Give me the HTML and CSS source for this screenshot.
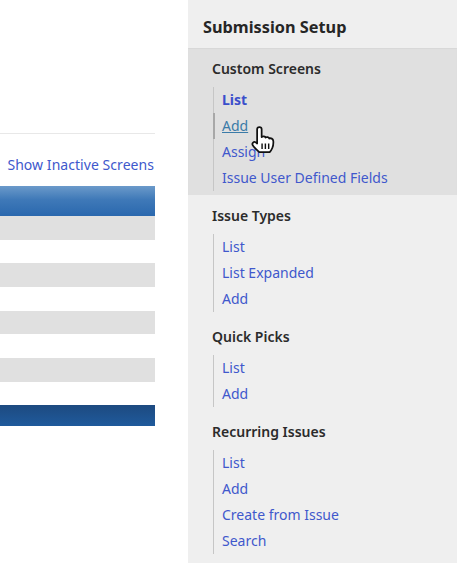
FILE: index.html
```html
<!DOCTYPE html>
<html>
<head>
  <meta charset="utf-8">
  <meta name="viewport" content="width=device-width, initial-scale=1.0">
  <title>Submission Setup</title>
  <link rel="stylesheet" href="styles.css">
</head>
<body>
  <main class="content">
    <div class="rule"></div>
    <div class="actions"><a href="#">Show Inactive Screens</a></div>
    <div class="table">
      <div class="table-head"></div>
      <div class="row"></div>
      <div class="row alt"></div>
      <div class="row"></div>
      <div class="row alt"></div>
      <div class="row"></div>
      <div class="row alt"></div>
      <div class="row"></div>
      <div class="row alt"></div>
      <div class="table-foot"></div>
    </div>
  </main>

  <aside class="sidebar">
    <h2 class="sidebar-title">Submission Setup</h2>

    <section class="group active">
      <h3>Custom Screens</h3>
      <ul class="links">
        <li><a href="#" class="current">List</a></li>
        <li class="hover"><a href="#">Add</a></li>
        <li><a href="#">Assign</a></li>
        <li><a href="#">Issue User Defined Fields</a></li>
      </ul>
      <svg class="cursor" width="29" height="33" viewBox="0 0 26 30">
        <path d="M6.300 3c0-2.500 4.100-2.500 4.100 0V10c1.300-1 3.100-.7 3.500.5 1.200-.8 3-.4 3.400.9 1.400-.7 3.600.2 3.700 2.200.2 2.500-.1 4.700-.9 6.400-.6 1.500-1.500 2.800-2.400 3.800H8.300C6.400 22 3.900 19.800 2.300 17.400c-1.100-1.700 1-3.800 2.700-2.500l1.300 1z" fill="#fff" stroke="#111" stroke-width="1.600" stroke-linejoin="round"/>
        <path d="M10.800 16v5M13.800 16v5M16.800 16v5" fill="none" stroke="#111" stroke-width="1.300"/>
      </svg>
    </section>

    <section class="group">
      <h3>Issue Types</h3>
      <ul class="links">
        <li><a href="#">List</a></li>
        <li><a href="#">List Expanded</a></li>
        <li><a href="#">Add</a></li>
      </ul>
    </section>

    <section class="group">
      <h3>Quick Picks</h3>
      <ul class="links">
        <li><a href="#">List</a></li>
        <li><a href="#">Add</a></li>
      </ul>
    </section>

    <section class="group">
      <h3>Recurring Issues</h3>
      <ul class="links">
        <li><a href="#">List</a></li>
        <li><a href="#">Add</a></li>
        <li><a href="#">Create from Issue</a></li>
        <li><a href="#">Search</a></li>
      </ul>
    </section>
  </aside>
</body>
</html>
```

FILE: styles.css
```css
html, body { height: 100%; }
body { font-family: "Noto Sans", "Open Sans", Arial, sans-serif; margin: 0; padding: 0; display: flex; background: #fff; overflow: hidden; }
a { text-decoration: none; color: #4058cc; }

.content { width: 155px; margin-right: 33px; padding-top: 133px; box-sizing: border-box; }
.rule { height: 1px; background: #e8e8e8; }
.actions { height: 52px; padding-top: 8px; display: flex; align-items: center; justify-content: flex-end; font-size: 14px; letter-spacing: .05px; white-space: nowrap; padding-right: 1px; box-sizing: border-box; }
.table-head { height: 30px; background: linear-gradient(#6b9aca, #3f79b8 45%, #2a68ae); }
.row { height: 23.67px; background: #e0e0e0; }
.row.alt { background: #fff; }
.table-foot { height: 20.67px; background: linear-gradient(#1d4a80, #1f5a9c); }

.sidebar { width: 269px; flex: none; background: #efefef; }
.sidebar-title { margin: 0; height: 48px; line-height: 54px; padding-left: 15px; font-size: 16.3px; font-weight: 700; color: #262626; }
.group { position: relative; padding: 0 24px 15px; }
.group h3 { margin: 0; font-size: 14px; font-weight: 600; color: #2b2b2b; line-height: 20px; padding: 0 0 8px; }
.group.active { background: #e0e0e0; padding-top: 11px; padding-bottom: 4px; margin-bottom: 11px; box-shadow: inset 0 1px 1px #d8d8d8; }
.links { list-style: none; margin: 0 0 0 1px; padding: 0 0 0 8px; border-left: 1px solid #c6c6c6; }
.links li { height: 26px; line-height: 26px; font-size: 14px; }
.links a.current { font-weight: 700; color: #3a4fcb; }
.hover { position: relative; }
.hover::before { content: ""; position: absolute; left: -9px; top: 0; width: 2px; height: 26px; background: #a8a8a8; }
.hover a { color: #3b7ba8; text-decoration: underline; }
.cursor { position: absolute; left: 62px; top: 78px; }
```
